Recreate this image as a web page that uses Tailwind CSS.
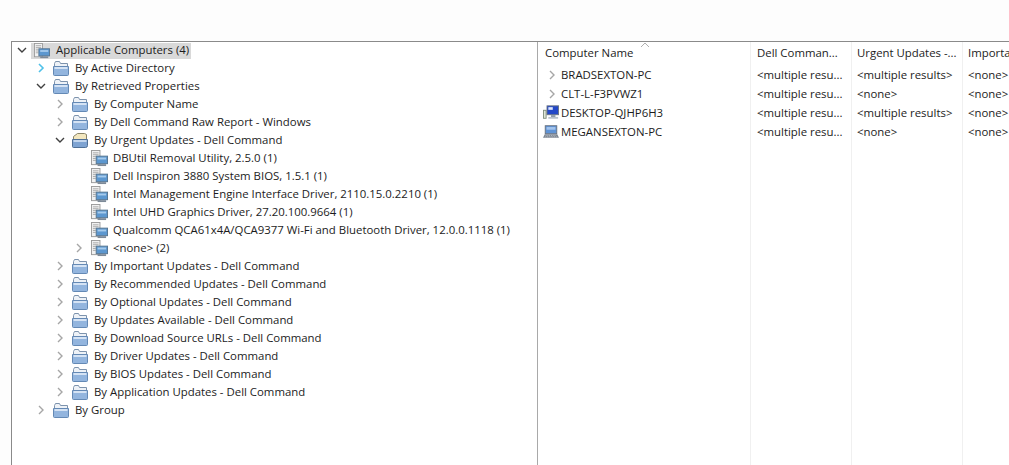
<!DOCTYPE html>
<html lang="en">
<head>
<meta charset="UTF-8">
<title>Applicable Computers</title>
<script src="https://cdn.jsdelivr.net/npm/@tailwindcss/browser@4"></script>
</head>
<body class="bg-[#fdfdfd] overflow-hidden">
<svg class="hidden">
  <symbol id="closed" viewBox="0 0 16 16">
    <path d="M1.5 3.5 l1 -2 h4 l1 2 h7 v3 h-13z" fill="#eef2f7" stroke="#7d93ad"/>
    <path d="M.5 6.5 h15 v8 q0 1 -1 1 h-13 q-1 0 -1 -1z" fill="#93b5de" stroke="#6489b5"/>
    <rect x="1.5" y="7" width="13" height="2" fill="#d5e3f4"/>
  </symbol>
  <symbol id="open" viewBox="0 0 16 16">
    <path d="M1.5 4.5 l4 -3 h7 l2 1 v5 h-13z" fill="#f3e7bf" stroke="#8a8468"/>
    <path d="M.5 7.5 h15 v6 q0 2 -2 2 h-12 q-1 0 -1 -1z" fill="#7ea3d2" stroke="#4f6f96"/>
    <rect x="1.5" y="8" width="13" height="2" fill="#c3d6ee"/>
  </symbol>
  <symbol id="comps" viewBox="0 0 18 18">
    <rect x=".5" y=".5" width="9" height="15" fill="#f1f1f1" stroke="#9a9a9a"/>
    <path d="M2 3h6M2 5h6M2 7h3M2 9h3M2 11h3" stroke="#a8a8a8"/>
    <rect x="5.5" y="6.5" width="12" height="8" fill="#5c97cf" stroke="#55748f"/>
    <rect x="7" y="8" width="9" height="2" fill="#a6cbec"/>
    <rect x="7" y="15" width="9" height="2" fill="#7d8a98"/>
  </symbol>
  <symbol id="desktop" viewBox="0 0 18 16">
    <rect x=".5" y="5.5" width="3" height="9" fill="#dfe6d8" stroke="#7c8a78"/>
    <rect x="4.5" y=".5" width="13" height="10" fill="#2348c8" stroke="#6a7480"/>
    <rect x="6" y="2" width="5" height="3" fill="#dfe8ff"/>
    <rect x="9" y="11" width="5" height="2" fill="#8a97a5"/>
    <rect x="6" y="13" width="11" height="2" fill="#b8c2cc"/>
  </symbol>
  <symbol id="laptop" viewBox="0 0 18 16">
    <rect x="2.5" y="1.5" width="13" height="9" fill="#5f93d6" stroke="#66707c"/>
    <rect x="4" y="3" width="10" height="3" fill="#a3c4ee"/>
    <path d="M2 11 h14 l2 4 h-18z" fill="#7c8590"/>
    <path d="M3 12.5h12M2.5 14h13" stroke="#b8c0ca" stroke-dasharray="1 1"/>
  </symbol>
  <symbol id="chev-right" viewBox="0 0 10 10">
    <path d="M3 1 l4 4 -4 4" fill="none" stroke="#a6a6a6" stroke-width="1.4"/>
  </symbol>
  <symbol id="chev-blue" viewBox="0 0 10 10">
    <path d="M3 1 l4 4 -4 4" fill="none" stroke="#4fc1e9" stroke-width="1.6"/>
  </symbol>
  <symbol id="chev-down" viewBox="0 0 10 10">
    <path d="M1 3 l4 4 4 -4" fill="none" stroke="#404040" stroke-width="1.4"/>
  </symbol>
</svg>

<div class="mt-[41px] ml-[11px] h-[424px] flex bg-white border-t border-l border-[#8a8a8a] text-[11.4px] leading-[18px] text-[#1c1c1c] font-['Open_Sans',sans-serif]">
  <!-- tree -->
  <div class="w-[526px] shrink-0 border-r border-[#a9a9a9]">
    <div class="-mt-px flex items-center h-[18px] pl-[5px]">
      <svg class="w-[10px] h-[10px] mr-[4px]"><use href="#chev-down"/></svg>
      <span class="flex items-center h-[16px] mt-[2px] pb-[2px] bg-[#d9d9d9] pr-[2px]">
        <svg class="w-[18px] h-[16px] ml-[2px] mt-[2px] shrink-0" viewBox="0 0 18 18"><use href="#comps"/></svg>
        <span class="ml-[5px]">Applicable Computers (4)</span>
      </span>
    </div>
    <div class="flex items-center h-[18px] pl-[24px]"><svg class="w-[10px] h-[10px] mr-[7px]"><use href="#chev-blue"/></svg><svg class="w-[16px] h-[16px] mr-[6px]"><use href="#closed"/></svg>By Active Directory</div>
    <div class="flex items-center h-[18px] pl-[24px]"><svg class="w-[10px] h-[10px] mr-[7px]"><use href="#chev-down"/></svg><svg class="w-[16px] h-[16px] mr-[6px]"><use href="#closed"/></svg>By Retrieved Properties</div>
    <div class="flex items-center h-[18px] pl-[43px]"><svg class="w-[10px] h-[10px] mr-[7px]"><use href="#chev-right"/></svg><svg class="w-[16px] h-[16px] mr-[6px]"><use href="#closed"/></svg>By Computer Name</div>
    <div class="flex items-center h-[18px] pl-[43px]"><svg class="w-[10px] h-[10px] mr-[7px]"><use href="#chev-right"/></svg><svg class="w-[16px] h-[16px] mr-[6px]"><use href="#closed"/></svg>By Dell Command Raw Report - Windows</div>
    <div class="flex items-center h-[18px] pl-[43px]"><svg class="w-[10px] h-[10px] mr-[7px]"><use href="#chev-down"/></svg><svg class="w-[16px] h-[16px] mr-[6px]"><use href="#open"/></svg>By Urgent Updates - Dell Command</div>
    <div class="flex items-center h-[18px] pl-[79px]"><svg class="w-[17px] h-[17px] mr-[5px]"><use href="#comps"/></svg>DBUtil Removal Utility, 2.5.0 (1)</div>
    <div class="flex items-center h-[18px] pl-[79px]"><svg class="w-[17px] h-[17px] mr-[5px]"><use href="#comps"/></svg>Dell Inspiron 3880 System BIOS, 1.5.1 (1)</div>
    <div class="flex items-center h-[18px] pl-[79px]"><svg class="w-[17px] h-[17px] mr-[5px]"><use href="#comps"/></svg>Intel Management Engine Interface Driver, 2110.15.0.2210 (1)</div>
    <div class="flex items-center h-[18px] pl-[79px]"><svg class="w-[17px] h-[17px] mr-[5px]"><use href="#comps"/></svg>Intel UHD Graphics Driver, 27.20.100.9664 (1)</div>
    <div class="flex items-center h-[18px] pl-[79px]"><svg class="w-[17px] h-[17px] mr-[5px]"><use href="#comps"/></svg>Qualcomm QCA61x4A/QCA9377 Wi-Fi and Bluetooth Driver, 12.0.0.1118 (1)</div>
    <div class="flex items-center h-[18px] pl-[62px]"><svg class="w-[10px] h-[10px] mr-[7px]"><use href="#chev-right"/></svg><svg class="w-[17px] h-[17px] mr-[5px]"><use href="#comps"/></svg>&lt;none&gt; (2)</div>
    <div class="flex items-center h-[18px] pl-[43px]"><svg class="w-[10px] h-[10px] mr-[7px]"><use href="#chev-right"/></svg><svg class="w-[16px] h-[16px] mr-[6px]"><use href="#closed"/></svg>By Important Updates - Dell Command</div>
    <div class="flex items-center h-[18px] pl-[43px]"><svg class="w-[10px] h-[10px] mr-[7px]"><use href="#chev-right"/></svg><svg class="w-[16px] h-[16px] mr-[6px]"><use href="#closed"/></svg>By Recommended Updates - Dell Command</div>
    <div class="flex items-center h-[18px] pl-[43px]"><svg class="w-[10px] h-[10px] mr-[7px]"><use href="#chev-right"/></svg><svg class="w-[16px] h-[16px] mr-[6px]"><use href="#closed"/></svg>By Optional Updates - Dell Command</div>
    <div class="flex items-center h-[18px] pl-[43px]"><svg class="w-[10px] h-[10px] mr-[7px]"><use href="#chev-right"/></svg><svg class="w-[16px] h-[16px] mr-[6px]"><use href="#closed"/></svg>By Updates Available - Dell Command</div>
    <div class="flex items-center h-[18px] pl-[43px]"><svg class="w-[10px] h-[10px] mr-[7px]"><use href="#chev-right"/></svg><svg class="w-[16px] h-[16px] mr-[6px]"><use href="#closed"/></svg>By Download Source URLs - Dell Command</div>
    <div class="flex items-center h-[18px] pl-[43px]"><svg class="w-[10px] h-[10px] mr-[7px]"><use href="#chev-right"/></svg><svg class="w-[16px] h-[16px] mr-[6px]"><use href="#closed"/></svg>By Driver Updates - Dell Command</div>
    <div class="flex items-center h-[18px] pl-[43px]"><svg class="w-[10px] h-[10px] mr-[7px]"><use href="#chev-right"/></svg><svg class="w-[16px] h-[16px] mr-[6px]"><use href="#closed"/></svg>By BIOS Updates - Dell Command</div>
    <div class="flex items-center h-[18px] pl-[43px]"><svg class="w-[10px] h-[10px] mr-[7px]"><use href="#chev-right"/></svg><svg class="w-[16px] h-[16px] mr-[6px]"><use href="#closed"/></svg>By Application Updates - Dell Command</div>
    <div class="flex items-center h-[18px] pl-[24px]"><svg class="w-[10px] h-[10px] mr-[7px]"><use href="#chev-right"/></svg><svg class="w-[16px] h-[16px] mr-[6px]"><use href="#closed"/></svg>By Group</div>
  </div>

  <!-- list -->
  <div class="flex-1 flex overflow-hidden whitespace-nowrap">
    <div class="relative w-[213px] shrink-0 border-r border-[#f0f0f0]">
      <svg class="absolute left-[102px] top-0 w-[10px] h-[5px]" viewBox="0 0 10 5"><path d="M1 5 l4 -4 4 4" fill="none" stroke="#b0b0b0"/></svg>
      <div class="h-[23px] pb-px pl-[7px] flex items-center">Computer Name</div>
      <div class="flex items-center h-[19px] pl-[9px]"><svg class="w-[10px] h-[10px] mr-[4px]"><use href="#chev-right"/></svg>BRADSEXTON-PC</div>
      <div class="flex items-center h-[19px] pl-[9px]"><svg class="w-[10px] h-[10px] mr-[4px]"><use href="#chev-right"/></svg>CLT-L-F3PVWZ1</div>
      <div class="flex items-center h-[19px] pl-[5px]"><svg class="w-[16px] h-[15px] mr-[2px]"><use href="#desktop"/></svg>DESKTOP-QJHP6H3</div>
      <div class="flex items-center h-[19px] pl-[5px]"><svg class="w-[16px] h-[15px] mr-[2px]"><use href="#laptop"/></svg>MEGANSEXTON-PC</div>
    </div>
    <div class="w-[101px] shrink-0 border-r border-[#f0f0f0]">
      <div class="h-[23px] pb-px pl-[6px] flex items-center">Dell Comman...</div>
      <div class="h-[19px] pl-[6px] flex items-center">&lt;multiple resu...</div>
      <div class="h-[19px] pl-[6px] flex items-center">&lt;multiple resu...</div>
      <div class="h-[19px] pl-[6px] flex items-center">&lt;multiple resu...</div>
      <div class="h-[19px] pl-[6px] flex items-center">&lt;multiple resu...</div>
    </div>
    <div class="w-[111px] shrink-0 border-r border-[#f0f0f0]">
      <div class="h-[23px] pb-px pl-[5px] flex items-center">Urgent Updates -...</div>
      <div class="h-[19px] pl-[5px] flex items-center">&lt;multiple results&gt;</div>
      <div class="h-[19px] pl-[5px] flex items-center">&lt;none&gt;</div>
      <div class="h-[19px] pl-[5px] flex items-center">&lt;multiple results&gt;</div>
      <div class="h-[19px] pl-[5px] flex items-center">&lt;none&gt;</div>
    </div>
    <div class="flex-1">
      <div class="h-[23px] pb-px pl-[5px] flex items-center">Important Updates</div>
      <div class="h-[19px] pl-[5px] flex items-center">&lt;none&gt;</div>
      <div class="h-[19px] pl-[5px] flex items-center">&lt;none&gt;</div>
      <div class="h-[19px] pl-[5px] flex items-center">&lt;none&gt;</div>
      <div class="h-[19px] pl-[5px] flex items-center">&lt;none&gt;</div>
    </div>
  </div>
</div>
</body>
</html>
